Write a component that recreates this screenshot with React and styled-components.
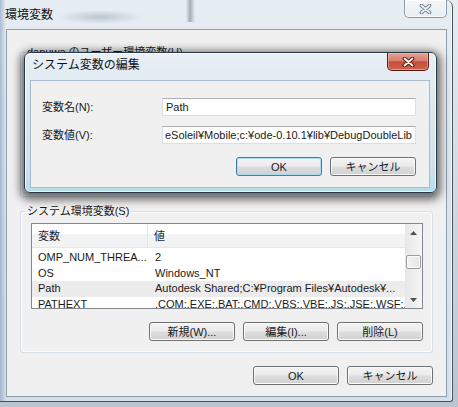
import styled, { createGlobalStyle } from 'styled-components';

const GlobalStyle = createGlobalStyle`
  html, body {
    margin: 0;
    padding: 0;
  }

  body {
    font-family: "Liberation Sans", "Noto Sans CJK JP", sans-serif;
    font-size: 11px;
    color: #1a1a1a;
    background: #cfd6dd;
  }
`;

const Desktop = styled.div`
  position: relative;
  width: 458px;
  height: 407px;
  overflow: hidden;
  background: linear-gradient(180deg, #e9edf1 0%, #b9c4ce 100%);
`;

const Window = styled.div`
  position: relative;
  width: 453px;
  height: 402px;
  box-sizing: border-box;
  display: flex;
  flex-direction: column;
  border-right: 1px solid #46525e;
  border-bottom: 1px solid #46525e;
  border-top-right-radius: 7px;
  border-bottom-right-radius: 3px;
  background:
    radial-gradient(ellipse 42px 7px at 100px 17px, rgba(140, 150, 162, 0.45), transparent),
    linear-gradient(90deg, transparent 186px, rgba(70, 80, 92, 0.4) 190px, transparent 195px) 0 0 / 100% 22px no-repeat,
    linear-gradient(90deg, rgba(96, 132, 170, 0.45) 0, rgba(255, 255, 255, 0) 6px),
    linear-gradient(180deg, #e6edf3 0%, #dbe4ec 45%, #d5dfe8 100%);
  box-shadow: inset -1px 0 0 #f6f9fb;
`;

const TitleBar = styled.div`
  height: ${(p) => p.$height}px;
  flex-shrink: 0;
  display: flex;
  align-items: flex-start;
  padding: 0 ${(p) => p.$right}px 0 ${(p) => p.$left}px;
`;

const TitleText = styled.span`
  margin-top: ${(p) => p.$offset}px;
  font-family: "Noto Sans CJK JP", sans-serif;
  line-height: 16px;
  font-size: 12px;
  color: #111;
`;

const CloseButton = styled.div`
  margin-left: auto;
  width: ${(p) => p.$width}px;
  height: ${(p) => p.$height}px;
  box-sizing: border-box;
  display: flex;
  align-items: center;
  justify-content: center;
  border: 1px solid ${(p) => (p.$active ? '#5a1d14' : '#8d9aa7')};
  border-top: none;
  border-radius: 0 0 5px 5px;
  background: ${(p) => (p.$active
    ? 'linear-gradient(180deg, #e4a294 0%, #d6806f 45%, #c44d3b 52%, #cd634c 100%)'
    : 'linear-gradient(180deg, rgba(255,255,255,0.55) 0%, rgba(235,241,246,0.35) 100%)')};
  box-shadow: inset 0 0 0 1px ${(p) => (p.$active ? 'rgba(255, 200, 190, 0.5)' : 'rgba(255, 255, 255, 0.7)')};
`;

const Client = styled.div`
  flex: 1;
  margin: 0 ${(p) => p.$right}px ${(p) => p.$bottom}px ${(p) => p.$left}px;
  border: 1px solid ${(p) => p.$border};
  background: #f0f0f0;
  display: flex;
  flex-direction: column;
  padding: ${(p) => p.$padding};
`;

const GroupBox = styled.fieldset`
  margin: 0 0 ${(p) => p.$gap}px;
  min-width: 0;
  height: ${(p) => p.$height}px;
  box-sizing: border-box;
  border: 1px solid #d5dfe5;
  border-radius: 3px;
  box-shadow: inset 0 0 0 1px #fbfcfd;
  padding: 5px 9px 12px 10px;
  display: flex;
  flex-direction: column;
`;

const Legend = styled.legend`
  margin-left: -5px;
  padding: 0 1px;
  line-height: 14px;
  font-size: 11px;
  color: #1a1a1a;
`;

const ListView = styled.div`
  height: 86px;
  flex-shrink: 0;
  box-sizing: border-box;
  border: 1px solid #828790;
  background: #fff;
  display: flex;
  overflow: hidden;
`;

const ListBody = styled.div`
  flex: 1;
  min-width: 0;
  display: flex;
  flex-direction: column;
  overflow: hidden;
`;

const HeaderRow = styled.div`
  height: 23px;
  flex-shrink: 0;
  display: flex;
  margin-bottom: 2px;
  background: linear-gradient(180deg, #ffffff 0%, #ffffff 42%, #f2f3f5 43%, #f2f3f5 100%);
  border-bottom: 1px solid #e4e6e8;
`;

const HeaderCell = styled.div`
  width: ${(p) => (p.$width ? `${p.$width}px` : 'auto')};
  flex: ${(p) => (p.$width ? 'none' : 1)};
  box-sizing: border-box;
  padding-left: 6px;
  display: flex;
  align-items: center;
  border-right: ${(p) => (p.$width ? '1px solid #e3e5e8' : 'none')};
  line-height: 14px;
  color: #1e1e1e;
`;

const Row = styled.div`
  height: 15.5px;
  flex-shrink: 0;
  display: flex;
  align-items: center;
  background: ${(p) => (p.$selected ? '#ececec' : 'transparent')};
`;

const Cell = styled.div`
  width: ${(p) => (p.$width ? `${p.$width}px` : 'auto')};
  flex: ${(p) => (p.$width ? 'none' : 1)};
  min-width: 0;
  box-sizing: border-box;
  padding-left: ${(p) => (p.$width ? 6 : 7)}px;
  white-space: nowrap;
  overflow: hidden;
  line-height: 15px;
`;

const ScrollBar = styled.div`
  width: 17px;
  flex-shrink: 0;
  display: flex;
  flex-direction: column;
  background: linear-gradient(90deg, #e7e7e7 0%, #f6f6f6 100%);
`;

const ScrollArrow = styled.div`
  height: 17px;
  flex-shrink: 0;
  display: flex;
  align-items: center;
  justify-content: center;
`;

const ScrollTrack = styled.div`
  flex: 1;
`;

const Thumb = styled.div`
  margin: ${(p) => p.$offset}px 1px 0;
  height: 14px;
  box-sizing: border-box;
  border: 1px solid #9b9b9b;
  border-radius: 2px;
  background: linear-gradient(90deg, #f4f4f4 0%, #e6e6e6 100%);
  box-shadow: inset 0 0 0 1px #fdfdfd;
`;

const ButtonRow = styled.div`
  display: flex;
  justify-content: flex-end;
  gap: 8px;
  margin-top: ${(p) => p.$top}px;
`;

const Button = styled.button`
  width: 86px;
  height: 19px;
  box-sizing: border-box;
  padding: 0;
  font-family: inherit;
  font-size: 11px;
  line-height: 16px;
  color: #1a1a1a;
  border: 1px solid ${(p) => (p.$default ? '#3c7fb1' : '#707070')};
  border-radius: 3px;
  background: linear-gradient(180deg, #f3f3f3 0%, #ebebeb 48%, #dddddd 52%, #d1d1d1 100%);
  box-shadow: inset 0 0 0 1px ${(p) => (p.$default ? '#a8dcf6' : '#fbfbfb')};
`;

const Dialog = styled.div`
  position: absolute;
  left: 24px;
  top: 52px;
  width: 413px;
  height: 141px;
  box-sizing: border-box;
  display: flex;
  flex-direction: column;
  border: 1px solid #2b3946;
  border-radius: 6px;
  background: linear-gradient(180deg, #e8eff5 0%, #dde7f0 40%, #cfe0ec 85%, #b4dcee 100%);
  box-shadow:
    0 3px 9px 4px rgba(0, 0, 0, 0.55),
    inset 0 0 0 1px rgba(255, 255, 255, 0.75);
`;

const FieldRow = styled.div`
  display: grid;
  grid-template-columns: 120px 1fr;
  align-items: center;
  margin-bottom: ${(p) => p.$gap}px;
`;

const FieldLabel = styled.span`
  line-height: 16px;
`;

const TextBox = styled.div`
  height: 18px;
  box-sizing: border-box;
  display: flex;
  align-items: center;
  justify-content: ${(p) => (p.$end ? 'flex-end' : 'flex-start')};
  padding: 0 3px;
  overflow: hidden;
  white-space: nowrap;
  background: #fff;
  border: 1px solid #dbdfe6;
  border-top-color: #abadb3;
  line-height: 16px;
`;

function CloseGlyph({ outline, fill }) {
  const d = 'M2.5 1.5 L10.5 8.5 M10.5 1.5 L2.5 8.5';
  return (
    <svg width="13" height="10" viewBox="0 0 13 10">
      <path d={d} stroke={outline} strokeWidth="3.8" strokeLinecap="round" fill="none" />
      <path d={d} stroke={fill} strokeWidth="1.8" strokeLinecap="round" fill="none" />
    </svg>
  );
}

function Arrow({ up }) {
  return (
    <svg width="7" height="4" viewBox="0 0 7 4">
      <path d={up ? 'M0 4 L3.5 0 L7 4 Z' : 'M0 0 L3.5 4 L7 0 Z'} fill="#505050" />
    </svg>
  );
}

const systemVars = [
  { name: 'OMP_NUM_THREA...', value: '2' },
  { name: 'OS', value: 'Windows_NT' },
  { name: 'Path', value: 'Autodesk Shared;C:¥Program Files¥Autodesk¥...', selected: true },
  { name: 'PATHEXT', value: '.COM;.EXE;.BAT;.CMD;.VBS;.VBE;.JS;.JSE;.WSF;...' },
];

function VarList({ rows }) {
  return (
    <ListView>
      <ListBody>
        <HeaderRow>
          <HeaderCell $width={116}>変数</HeaderCell>
          <HeaderCell>値</HeaderCell>
        </HeaderRow>
        {rows.map((row) => (
          <Row key={row.name} $selected={row.selected}>
            <Cell $width={116}>{row.name}</Cell>
            <Cell>{row.value}</Cell>
          </Row>
        ))}
      </ListBody>
      <ScrollBar>
        <ScrollArrow><Arrow up /></ScrollArrow>
        <ScrollTrack>
          <Thumb $offset={14} />
        </ScrollTrack>
        <ScrollArrow><Arrow /></ScrollArrow>
      </ScrollBar>
    </ListView>
  );
}

function EditDialog() {
  return (
    <Dialog>
      <TitleBar $height={27} $left={7} $right={7}>
        <TitleText $offset={3}>システム変数の編集</TitleText>
        <CloseButton $width={42} $height={18} $active>
          <CloseGlyph outline="#5b1a10" fill="#ffffff" />
        </CloseButton>
      </TitleBar>
      <Client $left={5} $right={6} $bottom={4} $border="#a9bccb" $padding="17px 13px 0 11px">
        <FieldRow $gap={10}>
          <FieldLabel>変数名(N):</FieldLabel>
          <TextBox>Path</TextBox>
        </FieldRow>
        <FieldRow $gap={0}>
          <FieldLabel>変数値(V):</FieldLabel>
          <TextBox $end>
            eSoleil¥Mobile;c:¥ode-0.10.1¥lib¥DebugDoubleLib
          </TextBox>
        </FieldRow>
        <ButtonRow $top={13}>
          <Button $default>OK</Button>
          <Button>キャンセル</Button>
        </ButtonRow>
      </Client>
    </Dialog>
  );
}

export default function App() {
  return (
    <>
      <GlobalStyle />
      <Desktop>
        <Window>
          <TitleBar $height={29} $left={5} $right={5}>
            <TitleText $offset={6}>環境変数</TitleText>
            <CloseButton $width={43} $height={18}>
              <CloseGlyph outline="#76838f" fill="#eef2f5" />
            </CloseButton>
          </TitleBar>
          <Client $left={6} $right={5} $bottom={4} $border="#8e9eac" $padding="15px 13px 0 13px">
            <GroupBox $height={152} $gap={7}>
              <Legend>danuwa のユーザー環境変数(U)</Legend>
            </GroupBox>
            <GroupBox $height={149} $gap={0}>
              <Legend>システム環境変数(S)</Legend>
              <VarList rows={systemVars} />
              <ButtonRow $top={13}>
                <Button>新規(W)...</Button>
                <Button>編集(I)...</Button>
                <Button>削除(L)</Button>
              </ButtonRow>
            </GroupBox>
            <ButtonRow $top={13}>
              <Button>OK</Button>
              <Button>キャンセル</Button>
            </ButtonRow>
          </Client>
          <EditDialog />
        </Window>
      </Desktop>
    </>
  );
}
